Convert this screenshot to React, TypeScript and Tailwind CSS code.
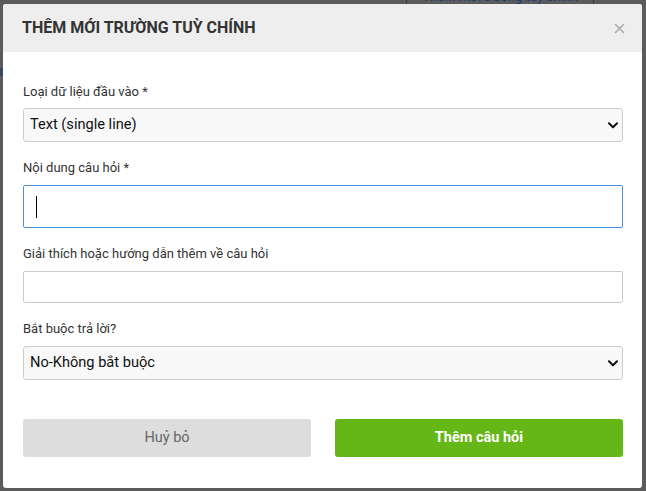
import React from "react";

const Chevron = () => (
  <svg width="10" height="7" viewBox="0 0 10 7" className="shrink-0">
    <path d="M1 1.2 L5 5.2 L9 1.2" fill="none" stroke="#111" strokeWidth="2" strokeLinecap="round" strokeLinejoin="round" />
  </svg>
);

export default function App() {
  return (
    <div className="w-[646px] h-[491px] bg-[#5b5b5b] relative overflow-hidden" style={{ fontFamily: "Roboto, 'Liberation Sans', sans-serif" }}>
      {/* background content peeking */}
      <div className="absolute left-[406px] top-[-12px] w-[188px] h-[18px] border-x border-b border-[#2d3e5a] text-[#1f3d73] text-[13px] leading-[18px] text-center">
        Thêm mới trường tuỳ chỉnh
      </div>
      <div className="absolute left-0 top-[68px] w-[3px] h-[8px] bg-[#3a4a60]" />

      <div className="absolute left-[3px] top-[4px] w-[639px] h-[484px] bg-white rounded-[3px] overflow-hidden flex flex-col">
        <div className="h-[48px] bg-[#eeeeee] flex items-center justify-between pl-[19px] pr-[17px] shrink-0">
          <div className="text-[16px] font-bold text-[#333]">THÊM MỚI TRƯỜNG TUỲ CHÍNH</div>
          <svg width="11" height="11" viewBox="0 0 11 11">
            <path d="M1 1 L10 10 M10 1 L1 10" stroke="#aaaaaa" strokeWidth="1.6" />
          </svg>
        </div>

        <div className="pl-[20px] pr-[19px] pt-[31px] flex flex-col text-[#333]">
          <div className="text-[13px] leading-[18px]">Loại dữ liệu đầu vào *</div>
          <div className="mt-[7px] h-[34px] bg-[#f8f8f8] border border-[#cccccc] rounded-[3px] flex items-center justify-between pl-[6px] pr-[4px] text-[14.6px] text-[#111]">
            <span>Text (single line)</span>
            <Chevron />
          </div>

          <div className="mt-[17px] text-[13px] leading-[18px]">Nội dung câu hỏi *</div>
          <div className="mt-[8px] h-[43px] bg-white border border-[#4a8fe0] rounded-[2px] flex items-center pl-[12px]">
            <div className="w-[1px] h-[22px] bg-black" />
          </div>

          <div className="mt-[17px] text-[13px] leading-[18px]">Giải thích hoặc hướng dẫn thêm về câu hỏi</div>
          <div className="mt-[8px] h-[32px] bg-white border border-[#cccccc] rounded-[2px]" />

          <div className="mt-[17px] text-[13px] leading-[18px]">Bắt buộc trả lời?</div>
          <div className="mt-[8px] h-[34px] bg-[#f8f8f8] border border-[#cccccc] rounded-[3px] flex items-center justify-between pl-[6px] pr-[4px] text-[14.6px] text-[#111]">
            <span>No-Không bắt buộc</span>
            <Chevron />
          </div>

          <div className="mt-[39px] flex gap-[24px]">
            <div className="flex-1 h-[38px] bg-[#dddddd] rounded-[3px] flex items-center justify-center text-[14.5px] text-[#666]">Huỷ bỏ</div>
            <div className="flex-1 h-[38px] bg-[#65b617] rounded-[3px] flex items-center justify-center text-[14.5px] font-bold text-white">Thêm câu hỏi</div>
          </div>
        </div>
      </div>
    </div>
  );
}
